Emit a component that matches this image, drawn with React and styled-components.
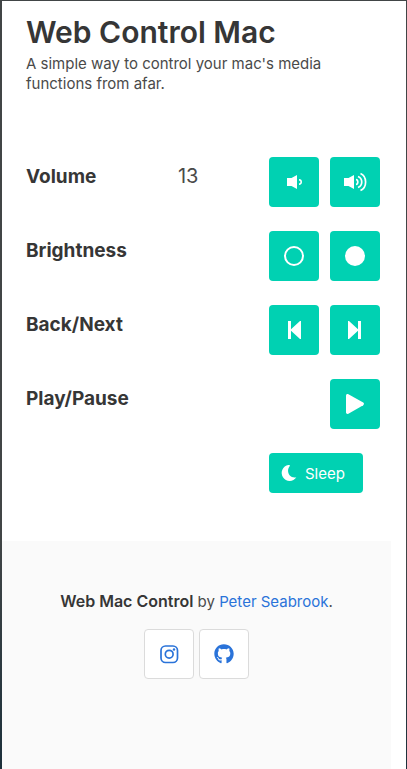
import React from "react";
import styled, { createGlobalStyle } from "styled-components";
import { FaGithub } from "react-icons/fa";

const GlobalStyle = createGlobalStyle`
  *, *::before, *::after { box-sizing: border-box; }
  body {
    margin: 0;
    background: #ffffff;
    color: #4a4a4a;
    font-family: Inter, "Liberation Sans", sans-serif;
    font-size: 15px;
  }
`;

const Page = styled.div`
  display: flex;
  flex-direction: column;
  min-height: 100vh;
  border-top: 1px solid;
  border-right: 1px solid;
  border-left: 2px solid;
  border-image: linear-gradient(#414546 70%, #1c303b) 1;
`;

const Header = styled.header`
  padding: 11px 24px 0;
`;

const Title = styled.h1`
  margin: 0 0 2px;
  color: #363636;
  font-size: 30px;
  font-weight: 600;
  line-height: 40px;
`;

const Subtitle = styled.p`
  margin: 0;
  line-height: 20px;
`;

const Controls = styled.main`
  display: flex;
  flex-direction: column;
  gap: 24px;
  padding: 63px 26px 48px 24px;
`;

const Row = styled.section`
  display: grid;
  grid-template-columns: 5fr 3fr 111px;
`;

const Label = styled.h2`
  margin: 0;
  padding-top: 7px;
  color: #363636;
  font-size: 19px;
  font-weight: 700;
  line-height: 26px;
`;

const Level = styled.output`
  padding-top: 6px;
  font-size: 20px;
  line-height: 26px;
`;

const Buttons = styled.div`
  display: flex;
  grid-column: 3;
  justify-content: ${(p) => p.$align || "flex-end"};
  gap: 11px;
`;

const ControlButton = styled.button`
  display: flex;
  align-items: center;
  justify-content: ${(p) => (p.$wide ? "flex-start" : "center")};
  gap: 8px;
  width: ${(p) => (p.$wide ? "94px" : "50px")};
  height: ${(p) => (p.$wide ? "40px" : "50px")};
  padding: ${(p) => (p.$wide ? "0 12px" : "0")};
  border: 0;
  border-radius: 4px;
  background: #00d1b2;
  color: #ffffff;
  font: inherit;
  cursor: pointer;
`;

const Footer = styled.footer`
  flex: 1;
  margin-right: 15px;
  padding: 48px 24px;
  background: #fafafa;
  text-align: center;
`;

const Credit = styled.p`
  margin: 0 0 14px;
  line-height: 26px;

  strong {
    color: #363636;
    font-size: 16px;
    font-weight: 600;
    line-height: 20px;
  }

  a {
    color: #2a73d9;
    text-decoration: none;
  }
`;

const Social = styled.nav`
  display: flex;
  justify-content: center;
  gap: 5px;
`;

const SocialLink = styled.a`
  display: flex;
  align-items: center;
  justify-content: center;
  width: 50px;
  height: 50px;
  border: 1px solid #dbdbdb;
  border-radius: 4px;
  background: #ffffff;
  color: #2a73d9;
`;

const Icon = ({ size = 24, children }) => (
  <svg width={size} height={size} viewBox="0 0 24 24" fill="currentColor" aria-hidden="true">
    {children}
  </svg>
);

const VolumeLow = () => (
  <Icon>
    <path d="M5 8h4.500L15 5v14l-5.500-3H5z" />
    <path d="M17 9.800c3 .2 3 4.200 0 4.400" fill="none" stroke="currentColor" strokeWidth="1.500" />
  </Icon>
);

const VolumeHigh = () => (
  <Icon>
    <path d="M1 8h4.500L11 5v14l-5.500-3H1z" />
    <g fill="none" stroke="currentColor" strokeWidth="1.700">
      <path d="M13 9.500c2.400.3 2.400 4.700 0 5" />
      <path d="M15 6.500c5 2 5 9 0 11" />
      <path d="M17.500 3.500c6.800 3 6.800 14 0 17" />
    </g>
  </Icon>
);

const Dim = () => (
  <Icon>
    <circle cx="12" cy="12" r="9" fill="none" stroke="currentColor" strokeWidth="2" />
  </Icon>
);

const Bright = () => (
  <Icon>
    <circle cx="12" cy="12" r="10" />
  </Icon>
);

const Back = () => (
  <Icon>
    <path d="M6 3h3v8.300L18 3h1v18h-1l-9-8.300V21H6z" />
  </Icon>
);

const Next = () => (
  <Icon>
    <path d="M18 3h-3v8.300L6 3H5v18h1l9-8.300V21h3z" />
  </Icon>
);

const Play = () => (
  <Icon>
    <path d="M3 3.500C3 2.200 4.300 1.600 5.400 2.200l14.800 8.300c1 .6 1 2.100 0 2.700L5.400 21.700C4.300 22.300 3 21.700 3 20.500z" />
  </Icon>
);

const Moon = () => (
  <Icon size={16}>
    <path d="M11 0A12 12 0 1 0 23 18.500C13 21 6.500 9.500 13.500 1c.5-.6-1.500-1-2.500-1z" />
  </Icon>
);

const Instagram = () => (
  <Icon>
    <g fill="none" stroke="currentColor" strokeWidth="1.700">
      <rect x="4" y="4" width="16.500" height="16.500" rx="4.500" />
      <circle cx="12.200" cy="12.200" r="3.900" />
    </g>
    <circle cx="17" cy="7.500" r="1.200" />
  </Icon>
);

export default function App() {
  return (
    <>
      <GlobalStyle />
      <Page>
        <Header>
          <Title>Web Control Mac</Title>
          <Subtitle>A simple way to control your mac's media functions from afar.</Subtitle>
        </Header>
        <Controls>
          <Row>
            <Label>Volume</Label>
            <Level>13</Level>
            <Buttons>
              <ControlButton type="button" aria-label="Volume down"><VolumeLow /></ControlButton>
              <ControlButton type="button" aria-label="Volume up"><VolumeHigh /></ControlButton>
            </Buttons>
          </Row>
          <Row>
            <Label>Brightness</Label>
            <Buttons>
              <ControlButton type="button" aria-label="Brightness down"><Dim /></ControlButton>
              <ControlButton type="button" aria-label="Brightness up"><Bright /></ControlButton>
            </Buttons>
          </Row>
          <Row>
            <Label>Back/Next</Label>
            <Buttons>
              <ControlButton type="button" aria-label="Back"><Back /></ControlButton>
              <ControlButton type="button" aria-label="Next"><Next /></ControlButton>
            </Buttons>
          </Row>
          <Row>
            <Label>Play/Pause</Label>
            <Buttons>
              <ControlButton type="button" aria-label="Play or pause"><Play /></ControlButton>
            </Buttons>
          </Row>
          <Row>
            <Buttons $align="flex-start">
              <ControlButton type="button" $wide><Moon />Sleep</ControlButton>
            </Buttons>
          </Row>
        </Controls>
        <Footer>
          <Credit>
            <strong>Web Mac Control</strong> by <a href="#author">Peter Seabrook</a>.
          </Credit>
          <Social>
            <SocialLink href="#instagram" aria-label="Instagram"><Instagram /></SocialLink>
            <SocialLink href="#github" aria-label="GitHub"><FaGithub size={20} /></SocialLink>
          </Social>
        </Footer>
      </Page>
    </>
  );
}
